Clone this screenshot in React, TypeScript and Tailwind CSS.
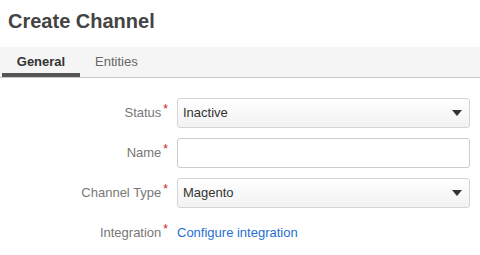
import React from 'react';

function Label({ text }: { text: string }) {
  return (
    <div className="w-[177px] shrink-0 pr-[9px] text-right text-[13px] text-[#777]">
      {text}
      <span className="relative -top-[4px] ml-[2px] text-[12px] text-[#c81c1c]">*</span>
    </div>
  );
}

function Select({ value }: { value: string }) {
  return (
    <div className="flex h-[30px] w-[293px] items-center justify-between rounded-[3px] border border-[#d4d4d4] bg-gradient-to-b from-white to-[#f2f2f2] pl-[5px] pr-[7px] text-[13px] text-[#333]">
      <span>{value}</span>
      <svg width="10" height="6" viewBox="0 0 10 6">
        <path d="M0 0 L10 0 L5 6 Z" fill="#333" />
      </svg>
    </div>
  );
}

export default function App() {
  return (
    <div className="h-[255px] w-[480px] bg-white font-['Liberation_Sans',Arial,sans-serif]">
      <h1 className="px-[8px] pt-[9px] text-[20px] font-bold leading-[24px] text-[#444]">Create Channel</h1>
      <div className="mt-[14px] flex h-[31px] border-b border-[#c8c8c8] bg-[#f5f5f5] pl-[2px]">
        <div className="flex h-[30px] w-[78px] items-center justify-center border-b-[4px] border-[#555] pt-[4px] text-[13px] font-bold text-[#333]">
          General
        </div>
        <div className="flex h-[30px] items-center pl-[15px] text-[13px] text-[#666]">Entities</div>
      </div>
      <div className="flex flex-col gap-[10px] pt-[20px]">
        <div className="flex items-center">
          <Label text="Status" />
          <Select value="Inactive" />
        </div>
        <div className="flex items-center">
          <Label text="Name" />
          <div className="h-[30px] w-[293px] rounded-[3px] border border-[#ccc] bg-white" />
        </div>
        <div className="flex items-center">
          <Label text="Channel Type" />
          <Select value="Magento" />
        </div>
        <div className="flex h-[30px] items-center">
          <Label text="Integration" />
          <a className="text-[13px] text-[#1f6fd1]">Configure integration</a>
        </div>
      </div>
    </div>
  );
}
